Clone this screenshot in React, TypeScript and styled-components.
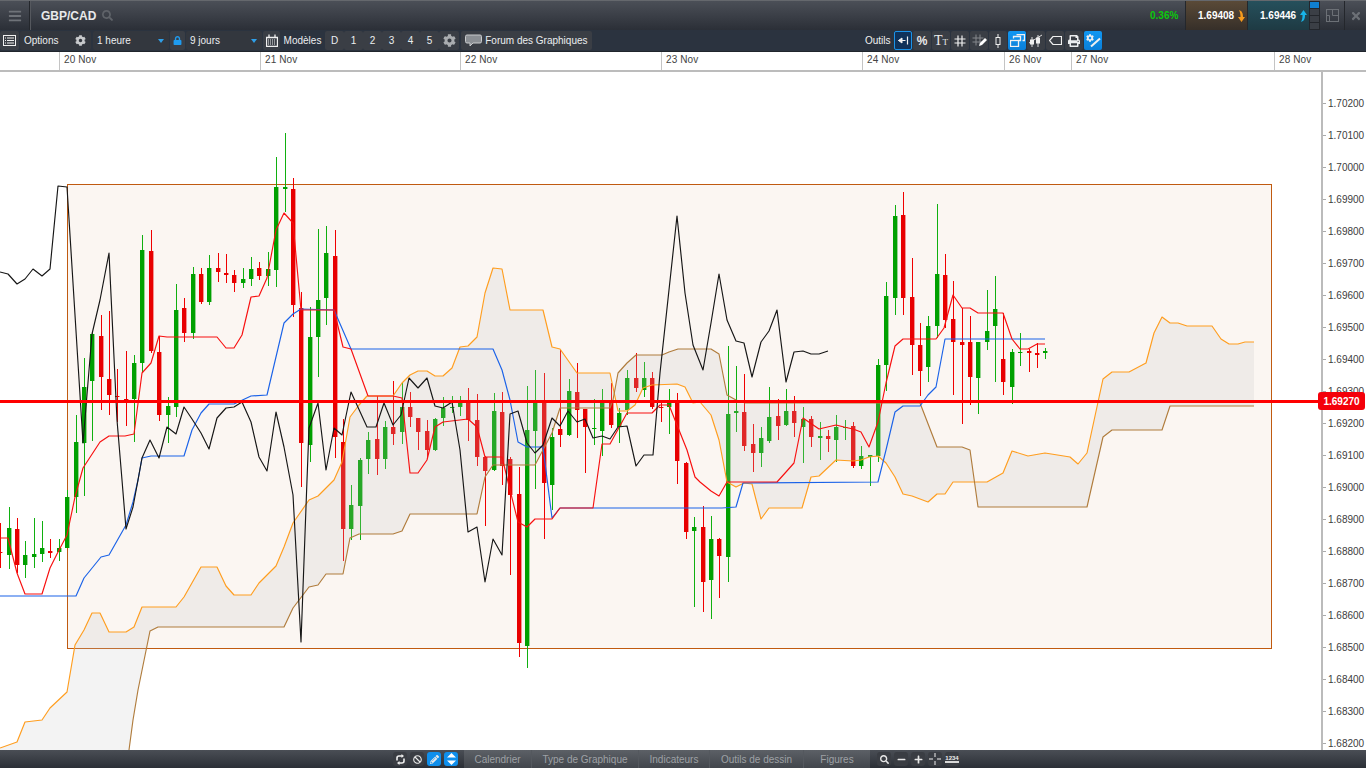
import React from "react";
import styled, { createGlobalStyle } from "styled-components";
import { FaCog, FaLock, FaPrint, FaSearch, FaBars, FaTimes, FaMinus, FaPlus, FaBan, FaPencilAlt } from "react-icons/fa";

const GlobalStyle = createGlobalStyle`
  html, body {
    margin: 0;
    padding: 0;
    background: #fff;
    font-family: "Liberation Sans", Arial, sans-serif;
  }
`;

// --- chart data, y values are page pixels ---
type Candle = [number, number, number, number, "g" | "r"];

const candles: Candle[] = [
  [523, 552, 553, 568, "r"], [507, 528, 555, 569, "g"], [518, 529, 565, 573, "r"], [541, 555, 565, 578, "g"],
  [518, 554, 557, 568, "g"], [521, 548, 554, 562, "g"], [539, 551, 553, 558, "r"], [539, 548, 552, 561, "g"],
  [490, 497, 548, 548, "g"], [415, 442, 497, 513, "g"], [358, 387, 443, 496, "g"], [332, 334, 381, 441, "g"],
  [315, 336, 377, 410, "r"], [311, 379, 395, 415, "r"], [369, 396, 397, 422, "r"], [351, 399, 400, 426, "r"],
  [355, 363, 399, 442, "g"], [235, 250, 363, 372, "g"], [230, 251, 351, 353, "r"], [336, 352, 415, 421, "r"],
  [397, 406, 415, 443, "g"], [284, 310, 407, 417, "g"], [298, 308, 333, 342, "r"], [267, 274, 333, 339, "g"],
  [268, 274, 302, 304, "r"], [255, 268, 302, 305, "g"], [253, 268, 272, 282, "r"], [254, 273, 275, 283, "r"],
  [270, 275, 283, 292, "r"], [268, 279, 283, 288, "g"], [257, 269, 279, 286, "g"], [262, 268, 276, 280, "r"],
  [252, 269, 276, 286, "g"], [157, 187, 270, 287, "g"], [133, 187, 189, 212, "g"], [178, 189, 305, 317, "r"],
  [292, 308, 443, 487, "r"], [307, 337, 445, 462, "g"], [229, 300, 337, 377, "g"], [226, 253, 298, 325, "g"],
  [230, 256, 437, 458, "r"], [419, 442, 529, 561, "r"], [485, 505, 529, 540, "g"], [458, 460, 506, 540, "g"],
  [432, 440, 459, 474, "g"], [396, 439, 459, 475, "r"], [421, 427, 459, 469, "g"], [381, 427, 434, 445, "r"],
  [382, 407, 432, 444, "g"], [392, 407, 417, 427, "r"], [418, 418, 432, 450, "r"], [420, 431, 450, 458, "r"],
  [418, 419, 450, 451, "g"], [397, 408, 418, 426, "g"], [396, 407, 408, 413, "g"], [396, 403, 407, 416, "g"],
  [388, 402, 420, 441, "r"], [394, 420, 457, 466, "r"], [456, 457, 471, 526, "r"], [393, 411, 470, 471, "g"],
  [392, 412, 466, 485, "r"], [457, 459, 495, 575, "r"], [467, 494, 643, 657, "r"], [386, 430, 646, 668, "g"],
  [370, 403, 431, 489, "g"], [373, 403, 483, 539, "r"], [428, 437, 485, 510, "g"], [350, 429, 435, 447, "r"],
  [379, 391, 435, 436, "g"], [363, 392, 410, 438, "r"], [409, 409, 427, 473, "r"], [399, 428, 429, 445, "g"],
  [389, 403, 431, 456, "g"], [383, 402, 425, 428, "r"], [408, 413, 427, 443, "g"], [370, 378, 410, 415, "g"],
  [353, 378, 388, 392, "r"], [362, 378, 390, 397, "g"], [372, 378, 407, 409, "r"], [400, 407, 408, 422, "r"],
  [389, 403, 407, 434, "g"], [393, 402, 461, 484, "r"], [462, 463, 532, 539, "r"], [517, 527, 531, 607, "g"],
  [506, 527, 582, 612, "r"], [516, 539, 580, 619, "g"], [538, 539, 556, 598, "r"], [346, 414, 557, 582, "g"],
  [366, 411, 413, 432, "g"], [374, 412, 446, 451, "r"], [424, 444, 453, 472, "r"], [427, 438, 453, 467, "g"],
  [387, 417, 441, 443, "g"], [399, 416, 426, 440, "r"], [389, 411, 425, 426, "g"], [396, 411, 423, 437, "r"],
  [407, 419, 427, 463, "g"], [416, 419, 437, 447, "r"], [422, 436, 438, 460, "g"], [430, 436, 439, 452, "r"],
  [415, 427, 440, 462, "g"], [420, 427, 428, 440, "g"], [422, 426, 466, 468, "r"], [446, 456, 466, 469, "g"],
  [455, 455, 457, 486, "g"], [359, 365, 456, 462, "g"], [282, 296, 365, 391, "g"], [205, 216, 298, 315, "g"],
  [192, 215, 298, 315, "r"], [258, 297, 345, 375, "r"], [323, 345, 371, 396, "r"], [316, 326, 367, 382, "g"],
  [204, 274, 326, 338, "g"], [254, 275, 320, 328, "r"], [281, 319, 342, 395, "r"], [308, 342, 345, 424, "r"],
  [316, 342, 377, 405, "r"], [342, 342, 378, 414, "g"], [290, 331, 342, 350, "g"], [276, 309, 326, 382, "g"],
  [313, 359, 382, 395, "r"], [349, 352, 387, 404, "g"], [333, 352, 353, 366, "g"], [349, 351, 353, 372, "r"],
  [343, 353, 355, 368, "r"], [348, 351, 353, 359, "g"],
];

const pts = (a: number[][]) => a.map((p) => p.join(",")).join(" ");

const black = [
  [0, 272], [8, 274], [17, 284], [25, 279], [33, 269], [42, 276], [50, 269], [58, 186], [67, 187], [83, 443], [92, 334],
  [100, 300], [109, 253], [117, 420], [122, 480], [126, 529], [133, 507], [138, 480], [142, 458], [150, 440], [159, 458],
  [167, 427], [176, 434], [184, 407], [192, 419], [201, 433], [209, 449], [217, 418], [226, 408], [234, 407], [242, 402],
  [251, 422], [259, 457], [267, 471], [276, 412], [284, 447], [293, 495], [301, 642], [307, 480], [309, 428], [318, 403],
  [326, 470], [334, 428], [342, 435], [351, 392], [367, 427], [376, 427], [384, 403], [393, 425], [401, 415], [409, 378],
  [418, 388], [427, 378], [435, 406], [443, 408], [452, 402], [460, 450], [468, 532], [477, 527], [485, 582], [493, 539],
  [502, 555], [510, 414], [518, 411], [527, 443], [535, 453], [543, 445], [552, 418], [560, 426], [568, 411], [577, 422],
  [585, 419], [593, 438], [602, 436], [610, 439], [618, 427], [627, 426], [636, 466], [644, 455], [653, 455], [660, 373],
  [677, 216], [685, 293], [693, 345], [703, 370], [711, 323], [719, 274], [727, 320], [736, 341], [744, 343], [752, 377],
  [761, 342], [769, 331], [777, 310], [786, 382], [794, 352], [803, 351], [811, 354], [819, 354], [828, 351],
];

const red = [
  [0, 538], [8, 538], [17, 573], [25, 594], [42, 594], [50, 568], [58, 552], [67, 535], [75, 497], [83, 468], [100, 442],
  [109, 436], [125, 436], [134, 434], [142, 373], [151, 363], [159, 336], [167, 337], [217, 337], [226, 348], [234, 348],
  [242, 335], [251, 297], [259, 296], [267, 278], [276, 230], [284, 213], [293, 223], [301, 310], [334, 310], [343, 347],
  [351, 349], [368, 396], [393, 396], [402, 398], [410, 473], [418, 473], [427, 460], [435, 427], [443, 422], [468, 419],
  [477, 427], [485, 457], [502, 457], [510, 490], [518, 522], [527, 527], [535, 519], [552, 519], [560, 508], [593, 508],
  [602, 444], [610, 444], [627, 413], [652, 413], [660, 405], [669, 405], [677, 425], [687, 450], [695, 477], [700, 482],
  [711, 491], [719, 496], [727, 482], [777, 482], [786, 472], [794, 463], [803, 418], [819, 429], [836, 425], [844, 427],
  [853, 429], [861, 432], [869, 447], [878, 422], [886, 383], [895, 346], [903, 339], [936, 339], [944, 328], [953, 295],
  [962, 308], [970, 308], [978, 313], [1003, 313], [1012, 339], [1020, 349], [1028, 349], [1037, 344], [1045, 344],
];

const blue = [
  [0, 596], [76, 596], [84, 578], [101, 557], [109, 555], [126, 525], [133, 502], [138, 480], [142, 458], [151, 456],
  [184, 456], [192, 430], [201, 413], [209, 404], [234, 404], [251, 396], [267, 395], [284, 323], [293, 314], [301, 309],
  [334, 310], [351, 349], [493, 349], [502, 370], [510, 400], [518, 442], [527, 447], [543, 447], [552, 518], [560, 508],
  [722, 508], [736, 507], [743, 483], [878, 482], [886, 450], [895, 412], [903, 406], [920, 406], [928, 395], [936, 387],
  [945, 339], [1045, 339],
];

const spanA = [
  [0, 748], [17, 742], [25, 722], [42, 720], [50, 708], [67, 692], [75, 645], [84, 630], [92, 613], [100, 613], [109, 632],
  [126, 632], [134, 627], [142, 607], [176, 607], [184, 597], [201, 567], [217, 567], [226, 586], [234, 595], [251, 595],
  [259, 583], [276, 566], [284, 547], [293, 523], [309, 500], [318, 496], [334, 480], [342, 462], [350, 417], [359, 405],
  [367, 396], [393, 396], [402, 383], [410, 375], [418, 371], [427, 371], [435, 376], [443, 376], [452, 368], [460, 347],
  [468, 346], [477, 337], [485, 293], [493, 268], [502, 269], [510, 310], [543, 310], [552, 347], [560, 349], [577, 373],
  [610, 373], [618, 411], [627, 411], [635, 405], [643, 388], [652, 385], [677, 384], [685, 387], [693, 403], [700, 402],
  [711, 415], [719, 440], [727, 482], [736, 487], [744, 483], [752, 484], [761, 519], [769, 508], [802, 508], [811, 477],
  [819, 476], [836, 460], [853, 461], [861, 460], [869, 457], [878, 456], [886, 463], [895, 477], [903, 494], [912, 496],
  [928, 502], [937, 494], [945, 494], [953, 482], [987, 482], [1003, 473], [1012, 451], [1028, 456], [1045, 453], [1070, 457],
  [1078, 464], [1087, 453], [1103, 379], [1112, 372], [1129, 372], [1146, 363], [1154, 333], [1162, 317], [1170, 323],
  [1178, 323], [1187, 326], [1212, 326], [1221, 339], [1229, 344], [1238, 344], [1245, 342], [1254, 342],
];

const spanB = [
  [129, 750], [133, 720], [138, 690], [150, 631], [158, 627], [284, 627], [293, 608], [309, 587], [318, 585], [326, 574],
  [343, 574], [350, 538], [359, 534], [393, 534], [402, 531], [410, 514], [477, 514], [485, 477], [493, 465], [535, 465],
  [552, 433], [560, 408], [610, 408], [613, 400], [618, 373], [627, 363], [636, 355], [662, 355], [669, 352], [678, 349],
  [711, 349], [719, 354], [727, 395], [736, 400], [745, 403], [920, 403], [937, 447], [962, 447], [970, 450], [978, 507],
  [1087, 507], [1103, 437], [1112, 430], [1162, 430], [1170, 406], [1254, 406],
];

const cloud = [...spanA, ...[...spanB].reverse(), [0, 750]];
const priceTicks = Array.from({ length: 21 }, (_, i) => ({ y: 103 + i * 32, label: (1.702 - i * 0.001).toFixed(5) }));
const dates = [
  { w: 201, t: "20 Nov" }, { w: 200, t: "21 Nov" }, { w: 201, t: "22 Nov" }, { w: 201, t: "23 Nov" },
  { w: 142, t: "24 Nov" }, { w: 67, t: "26 Nov" }, { w: 203, t: "27 Nov" }, { w: 92, t: "28 Nov" },
];

// --- page frame ---
const Page = styled.div`
  width: 1366px;
  height: 768px;
  display: flex;
  flex-direction: column;
  overflow: hidden;
  color: #e4e6e8;
  font-size: 10px;
`;

const TopBar = styled.header`
  height: 30px;
  flex: none;
  display: flex;
  align-items: stretch;
  box-sizing: border-box;
  border-top: 1px solid #65686d;
  background: linear-gradient(#4b4f57, #2b2f37);
`;

const MenuCell = styled.div`
  width: 29px;
  display: flex;
  align-items: center;
  justify-content: center;
  color: #6f7379;
  font-size: 14px;
  border-right: 1px solid #24272c;
  box-shadow: 1px 0 0 #55585e;
`;

const Pair = styled.div`
  margin-left: 11px;
  display: flex;
  align-items: center;
  gap: 6px;
  font-size: 12px;
  font-weight: bold;
  color: #e8e9ea;
  svg {
    color: #5f6369;
    font-size: 11px;
  }
`;

const Quotes = styled.div`
  margin-left: auto;
  display: flex;
  align-items: stretch;
`;

const Change = styled.div`
  width: 35px;
  align-self: center;
  font-weight: bold;
  color: #0bc90b;
`;

const Quote = styled.div<{ $side: "sell" | "buy" }>`
  width: 62px;
  box-sizing: border-box;
  padding-left: 12px;
  display: flex;
  align-items: center;
  gap: 4px;
  font-weight: bold;
  color: #fff;
  border-left: 1px solid #24272c;
  background: ${(p) =>
    p.$side === "sell" ? "linear-gradient(#5a4a37, #362f29)" : "linear-gradient(#26505c, #1e3a43)"};
`;

const Strength = styled.div`
  width: 10px;
  padding: 1px 0 1px 1px;
  display: flex;
  flex-direction: column;
  gap: 1px;
  box-sizing: border-box;
  background: #23262c;
`;

const StrengthBar = styled.span<{ $on?: boolean }>`
  flex: 1;
  background: ${(p) => (p.$on ? "#0f7fd0" : "#3b3f46")};
`;

const WindowButton = styled.div<{ $w: number }>`
  width: ${(p) => p.$w}px;
  display: flex;
  align-items: center;
  justify-content: center;
  color: #6c7076;
  font-size: 12px;
  border-left: 1px solid #24272c;
`;

const ToolBar = styled.div`
  height: 22px;
  flex: none;
  display: flex;
  align-items: center;
  background: #2b333f;
  border-bottom: 1px solid #20252c;
  box-sizing: border-box;
`;

const ToolCell = styled.div<{ $w: number; $gap?: number; $blue?: boolean; $selected?: boolean; $plain?: boolean }>`
  width: ${(p) => p.$w}px;
  height: 19px;
  flex: none;
  margin-left: ${(p) => p.$gap ?? 0}px;
  box-sizing: border-box;
  display: flex;
  align-items: center;
  justify-content: center;
  border-radius: 2px;
  color: #eceef0;
  white-space: nowrap;
  background: ${(p) =>
    p.$blue ? "linear-gradient(#1097f2, #0a7fd8)" : p.$selected ? "#10325a" : p.$plain ? "transparent" : "#3a3e45"};
  border: ${(p) => (p.$selected ? "1px solid #1a93ea" : "none")};
`;

const SelectCell = styled(ToolCell)`
  justify-content: space-between;
  padding: 0 5px 0 4px;
  background: #33373e;
`;

const Caret = styled.span`
  width: 0;
  height: 0;
  border-left: 3px solid transparent;
  border-right: 3px solid transparent;
  border-top: 4px solid #2f9fe8;
`;

const GapFill = styled.div`
  flex: 1;
`;

const OutilsLabel = styled.span`
  width: 28px;
  color: #f0f0f0;
`;

const ToolsGroup = styled.div`
  display: flex;
  align-items: center;
  gap: 1px;
  margin-right: 264px;
`;

const GearTiny = styled(FaCog)`
  font-size: 11px;
  color: #c8cacc;
`;

const DateAxis = styled.div`
  height: 20px;
  flex: none;
  display: flex;
  box-sizing: border-box;
  padding-left: 59px;
  background: #fff;
  border-bottom: 2px solid #bcbcbc;
`;

const DateCell = styled.div<{ $w: number }>`
  width: ${(p) => p.$w}px;
  flex: none;
  box-sizing: border-box;
  padding: 2px 0 0 4px;
  border-left: 1px solid #c4c4c4;
  color: #444;
  letter-spacing: 0.1px;
`;

const ChartArea = styled.main`
  position: relative;
  flex: 1;
  min-height: 0;
  background: #fff;
`;

const ChartSvg = styled.svg`
  display: block;
`;

const Series = styled.polyline<{ $c: string }>`
  fill: none;
  stroke: ${(p) => p.$c};
  stroke-width: 1.15;
  stroke-linejoin: round;
`;

const Cloud = styled.polygon`
  fill: rgba(196, 196, 196, 0.2);
`;

const Zone = styled.rect`
  fill: #fbf6f2;
  stroke: #c05a10;
  stroke-width: 1;
`;

const PriceLabel = styled.text`
  font-family: "Liberation Sans", Arial, sans-serif;
  font-size: 10px;
  fill: #3c3c3c;
`;

const PriceBadge = styled.div`
  position: absolute;
  right: 1px;
  top: 320px;
  width: 47px;
  height: 18px;
  display: flex;
  align-items: center;
  justify-content: center;
  border-radius: 3px;
  background: #f4000a;
  color: #fff;
  font-weight: bold;
`;

const BottomBar = styled.footer`
  height: 18px;
  flex: none;
  display: flex;
  align-items: stretch;
  padding-left: 393px;
  box-sizing: border-box;
  background: linear-gradient(#4a4e55, #2b2f36);
`;

const BottomIcons = styled.div<{ $gap: number; $left?: number }>`
  display: flex;
  align-items: center;
  gap: ${(p) => p.$gap}px;
  margin-left: ${(p) => p.$left ?? 0}px;
`;

const RoundButton = styled.div<{ $blue?: boolean; $w?: number }>`
  width: ${(p) => p.$w ?? 14}px;
  height: 14px;
  display: flex;
  align-items: center;
  justify-content: center;
  border-radius: 3px;
  color: #e8e8e8;
  font-size: 9px;
  background: ${(p) => (p.$blue ? "#0f8fec" : "#3a3d43")};
`;

const BottomMenu = styled.nav`
  display: flex;
  margin-left: 6px;
  background: linear-gradient(#5c6066, #42464c);
`;

const MenuItem = styled.div<{ $w: number }>`
  width: ${(p) => p.$w}px;
  display: flex;
  align-items: center;
  justify-content: center;
  color: #9ea1a5;
  box-sizing: border-box;
  border-right: 1px solid #54585e;
  &:last-child {
    border-right: none;
  }
`;

// --- small drawings ---
const Glyph = ({ w = 14, h = 14, children }: { w?: number; h?: number; children: React.ReactNode }) => (
  <svg width={w} height={h} viewBox={`0 0 ${w} ${h}`} fill="none" stroke="#f0f0f0" strokeWidth="1">
    {children}
  </svg>
);

const ListIcon = () => (
  <Glyph w={13} h={11}>
    <rect x="0.5" y="0.5" width="12" height="10" />
    <path d="M2 3h1M4 3h7M2 5.5h1M4 5.5h7M2 8h1M4 8h7" />
  </Glyph>
);

const CalendarIcon = () => (
  <Glyph w={12} h={13}>
    <path d="M0.5 3.5h11v9h-11zM3 0.5v3M9 0.5v3" strokeWidth="1.3" />
    <path d="M2 6h8M2 8h8M2 10h8" strokeDasharray="1 1" />
  </Glyph>
);

const ForumIcon = () => (
  <svg width="17" height="13" viewBox="0 0 17 13">
    <path d="M2 1h13a1.5 1.5 0 0 1 1.5 1.5v5A1.5 1.5 0 0 1 15 9H8l-3 3V9H2A1.5 1.5 0 0 1 .5 7.5v-5A1.5 1.5 0 0 1 2 1z" fill="#8b8f94" stroke="#c8cacc" />
  </svg>
);

const ArrowDown = () => (
  <svg width="7" height="12" viewBox="0 0 7 12">
    <path d="M1 0c3 1 4 3 4 7h2l-3.5 5L0 7h2.5C2.5 4 2 2 1 0z" fill="#f59a1c" />
  </svg>
);

const ArrowUp = () => (
  <svg width="7" height="12" viewBox="0 0 7 12">
    <path d="M1 12c3-1 4-3 4-7h2L3.5 0 0 5h2.5C2.5 8 2 10 1 12z" fill="#18b4e8" />
  </svg>
);

const PopoutIcon = () => (
  <svg width="13" height="13" viewBox="0 0 13 13" fill="none" stroke="#6c7076">
    <rect x="0.5" y="0.5" width="12" height="12" />
    <path d="M6.5 0.5v6h6M0.5 6.5h3v6" />
  </svg>
);

const ToolIcons: Record<string, React.ReactNode> = {
  back: (
    <Glyph w={12} h={10}>
      <path d="M10.5 0.5v8M1.5 4.5h7" strokeWidth="1.2" />
      <path d="M5 2L1.5 4.5 5 7z" fill="#f0f0f0" />
    </Glyph>
  ),
  grid: (
    <Glyph w={12} h={12}>
      <path d="M4 0.5v11M8 0.5v11M0.5 4h11M0.5 8h11" strokeWidth="1.2" />
    </Glyph>
  ),
  gridPen: (
    <Glyph w={15} h={14}>
      <path d="M4 0.5v11M8 0.5v11M0.5 4h11M0.5 8h11" stroke="#85888d" />
      <path d="M7 12l1-3 5-5 2 2-5 5z" fill="#fff" stroke="none" />
    </Glyph>
  ),
  candle: (
    <Glyph w={8} h={14}>
      <path d="M4 0v14" />
      <rect x="2" y="3.5" width="4" height="7" fill="#3a3e45" />
    </Glyph>
  ),
  windows: (
    <Glyph w={15} h={13}>
      <rect x="0.5" y="6.5" width="8" height="6" strokeWidth="1.3" />
      <path d="M3.5 4.5v-2h7v4h-2M6.5 0.5h8v6h-2" strokeWidth="1.3" />
    </Glyph>
  ),
  candles: (
    <Glyph w={14} h={14}>
      <path d="M3 3v10M9 1v12M0 9l13-8" strokeWidth="0.9" />
      <rect x="1.5" y="6" width="3" height="4" fill="#f0f0f0" />
      <rect x="7.5" y="4" width="3" height="5" fill="#f0f0f0" />
    </Glyph>
  ),
  tag: (
    <Glyph w={13} h={9}>
      <path d="M4 0.5h8.5v8H4L0.5 4.5z" strokeWidth="1.2" />
    </Glyph>
  ),
  gearPen: (
    <Glyph w={15} h={14}>
      <path d="M5 12.5l9-8" strokeWidth="2" />
    </Glyph>
  ),
};

const TextTool = styled.span`
  font-family: "Liberation Serif", serif;
  font-size: 14px;
  color: #ececec;
  small {
    font-size: 9px;
  }
`;

const PercentTool = styled.span`
  font-weight: bold;
  font-size: 12px;
  color: #ececec;
`;

const GearOverPen = styled.span`
  position: relative;
  display: flex;
  svg + svg {
    position: absolute;
    left: 0;
    top: 0;
  }
`;

const TinyRuler = styled.span`
  font-size: 6px;
  font-weight: bold;
  color: #eee;
  border-bottom: 2px solid #d8d8d8;
  line-height: 6px;
`;

const CrossIcon = () => (
  <Glyph w={12} h={12}>
    <path d="M6 0v4M6 8v4M0 6h4M8 6h4" />
  </Glyph>
);

const CycleIcon = () => (
  <svg width="11" height="11" viewBox="0 0 11 11" fill="none" stroke="#eee" strokeWidth="1.6">
    <path d="M2 6.5V4a2 2 0 0 1 2-2h3M9 4.5V7a2 2 0 0 1-2 2H4" />
    <path d="M6.5 0l2.5 2-2.5 2zM4.5 7L2 9l2.5 2z" fill="#eee" stroke="none" />
  </svg>
);

const UpDownIcon = () => (
  <svg width="9" height="12" viewBox="0 0 9 12">
    <path d="M4.5 0L9 4.5H0zM4.5 12L0 7.5h9z" fill="#fff" />
  </svg>
);

const Candles = () => (
  <g>
    {candles.map(([hi, top, bot, lo, side], n) => {
      const x = Math.round(0.3 + 8.36 * n);
      const c = side === "g" ? "#00a000" : "#e80000";
      const wick = side === "g" ? "#10b010" : "#f00000";
      return (
        <g key={n}>
          <rect x={x} y={hi} width={1} height={lo - hi} fill={wick} />
          <rect x={x - 2} y={top} width={4} height={Math.max(bot - top, 1)} fill={c} />
          <rect x={x + 2} y={top} width={1} height={Math.max(bot - top, 1)} fill={c} fillOpacity={0.4} />
        </g>
      );
    })}
  </g>
);

const Chart = () => (
  <ChartSvg width={1366} height={678} viewBox="0 72 1366 678">
    <Zone x={67.5} y={184.5} width={1204} height={464} />
    <Candles />
    <Cloud points={pts(cloud)} />
    <Series $c="#ff9d1e" points={pts(spanA)} />
    <Series $c="#b07c3c" points={pts(spanB)} />
    <Series $c="#1a62e8" points={pts(blue)} />
    <Series $c="#f80f0f" points={pts(red)} />
    <Series $c="#161616" points={pts(black)} />
    <rect x={0} y={400} width={1320} height={3} fill="#ff0000" />
    <rect x={1321} y={72} width={2} height={678} fill="#bbbbbb" />
    {priceTicks.map((t) => (
      <g key={t.label}>
        <rect x={1323} y={t.y} width={3} height={1} fill="#aaaaaa" />
        <PriceLabel x={1328} y={t.y + 4}>
          {t.label}
        </PriceLabel>
      </g>
    ))}
  </ChartSvg>
);

const App = () => (
  <Page>
    <GlobalStyle />
    <TopBar>
      <MenuCell>
        <FaBars />
      </MenuCell>
      <Pair>
        GBP/CAD
        <FaSearch />
      </Pair>
      <Quotes>
        <Change>0.36%</Change>
        <Quote $side="sell">
          1.69408
          <ArrowDown />
        </Quote>
        <Quote $side="buy">
          1.69446
          <ArrowUp />
        </Quote>
        <Strength>
          <StrengthBar $on />
          <StrengthBar />
          <StrengthBar />
          <StrengthBar />
        </Strength>
        <WindowButton $w={24}>
          <PopoutIcon />
        </WindowButton>
        <WindowButton $w={21}>
          <FaTimes />
        </WindowButton>
      </Quotes>
    </TopBar>

    <ToolBar>
      <ToolCell $w={19}>
        <ListIcon />
      </ToolCell>
      <SelectCell $w={71} $gap={1}>
        Options
        <GearTiny />
      </SelectCell>
      <SelectCell $w={76} $gap={2}>
        1 heure
        <Caret />
      </SelectCell>
      <ToolCell $w={15} $gap={1}>
        <FaLock color="#1f9cf0" size={9} />
      </ToolCell>
      <SelectCell $w={76} $gap={1}>
        9 jours
        <Caret />
      </SelectCell>
      <ToolCell $w={17} $gap={1}>
        <CalendarIcon />
      </ToolCell>
      <ToolCell $w={45} $plain>
        Modèles
      </ToolCell>
      {["D", "1", "2", "3", "4", "5"].map((m) => (
        <ToolCell key={m} $w={19}>
          {m}
        </ToolCell>
      ))}
      <ToolCell $w={20}>
        <FaCog color="#aaadb0" size={13} />
      </ToolCell>
      <ToolCell $w={131} $gap={2}>
        <ForumIcon />
        &nbsp;Forum des Graphiques
      </ToolCell>
      <GapFill />
      <ToolsGroup>
        <OutilsLabel>Outils</OutilsLabel>
        <ToolCell $w={18} $selected>
          {ToolIcons.back}
        </ToolCell>
        <ToolCell $w={18}>
          <PercentTool>%</PercentTool>
        </ToolCell>
        <ToolCell $w={18}>
          <TextTool>
            T<small>T</small>
          </TextTool>
        </ToolCell>
        <ToolCell $w={18}>{ToolIcons.grid}</ToolCell>
        <ToolCell $w={18}>{ToolIcons.gridPen}</ToolCell>
        <ToolCell $w={18}>{ToolIcons.candle}</ToolCell>
        <ToolCell $w={18} $blue>
          {ToolIcons.windows}
        </ToolCell>
        <ToolCell $w={18}>{ToolIcons.candles}</ToolCell>
        <ToolCell $w={18}>{ToolIcons.tag}</ToolCell>
        <ToolCell $w={18}>
          <FaPrint size={12} />
        </ToolCell>
        <ToolCell $w={18} $blue>
          <GearOverPen>
            {ToolIcons.gearPen}
            <FaCog size={8} />
          </GearOverPen>
        </ToolCell>
      </ToolsGroup>
    </ToolBar>

    <DateAxis>
      {dates.map((d) => (
        <DateCell key={d.t} $w={d.w}>
          {d.t}
        </DateCell>
      ))}
    </DateAxis>

    <ChartArea>
      <Chart />
      <PriceBadge>1.69270</PriceBadge>
    </ChartArea>

    <BottomBar>
      <BottomIcons $gap={3}>
        <RoundButton>
          <CycleIcon />
        </RoundButton>
        <RoundButton>
          <FaBan />
        </RoundButton>
        <RoundButton $blue>
          <FaPencilAlt />
        </RoundButton>
        <RoundButton $blue>
          <UpDownIcon />
        </RoundButton>
      </BottomIcons>
      <BottomMenu>
        <MenuItem $w={68}>Calendrier</MenuItem>
        <MenuItem $w={107}>Type de Graphique</MenuItem>
        <MenuItem $w={71}>Indicateurs</MenuItem>
        <MenuItem $w={94}>Outils de dessin</MenuItem>
        <MenuItem $w={66}>Figures</MenuItem>
      </BottomMenu>
      <BottomIcons $gap={3} $left={7}>
        <RoundButton>
          <FaSearch />
        </RoundButton>
        <RoundButton>
          <FaMinus />
        </RoundButton>
        <RoundButton>
          <FaPlus />
        </RoundButton>
        <RoundButton>
          <CrossIcon />
        </RoundButton>
        <RoundButton>
          <TinyRuler>1234</TinyRuler>
        </RoundButton>
      </BottomIcons>
    </BottomBar>
  </Page>
);

export default App;
